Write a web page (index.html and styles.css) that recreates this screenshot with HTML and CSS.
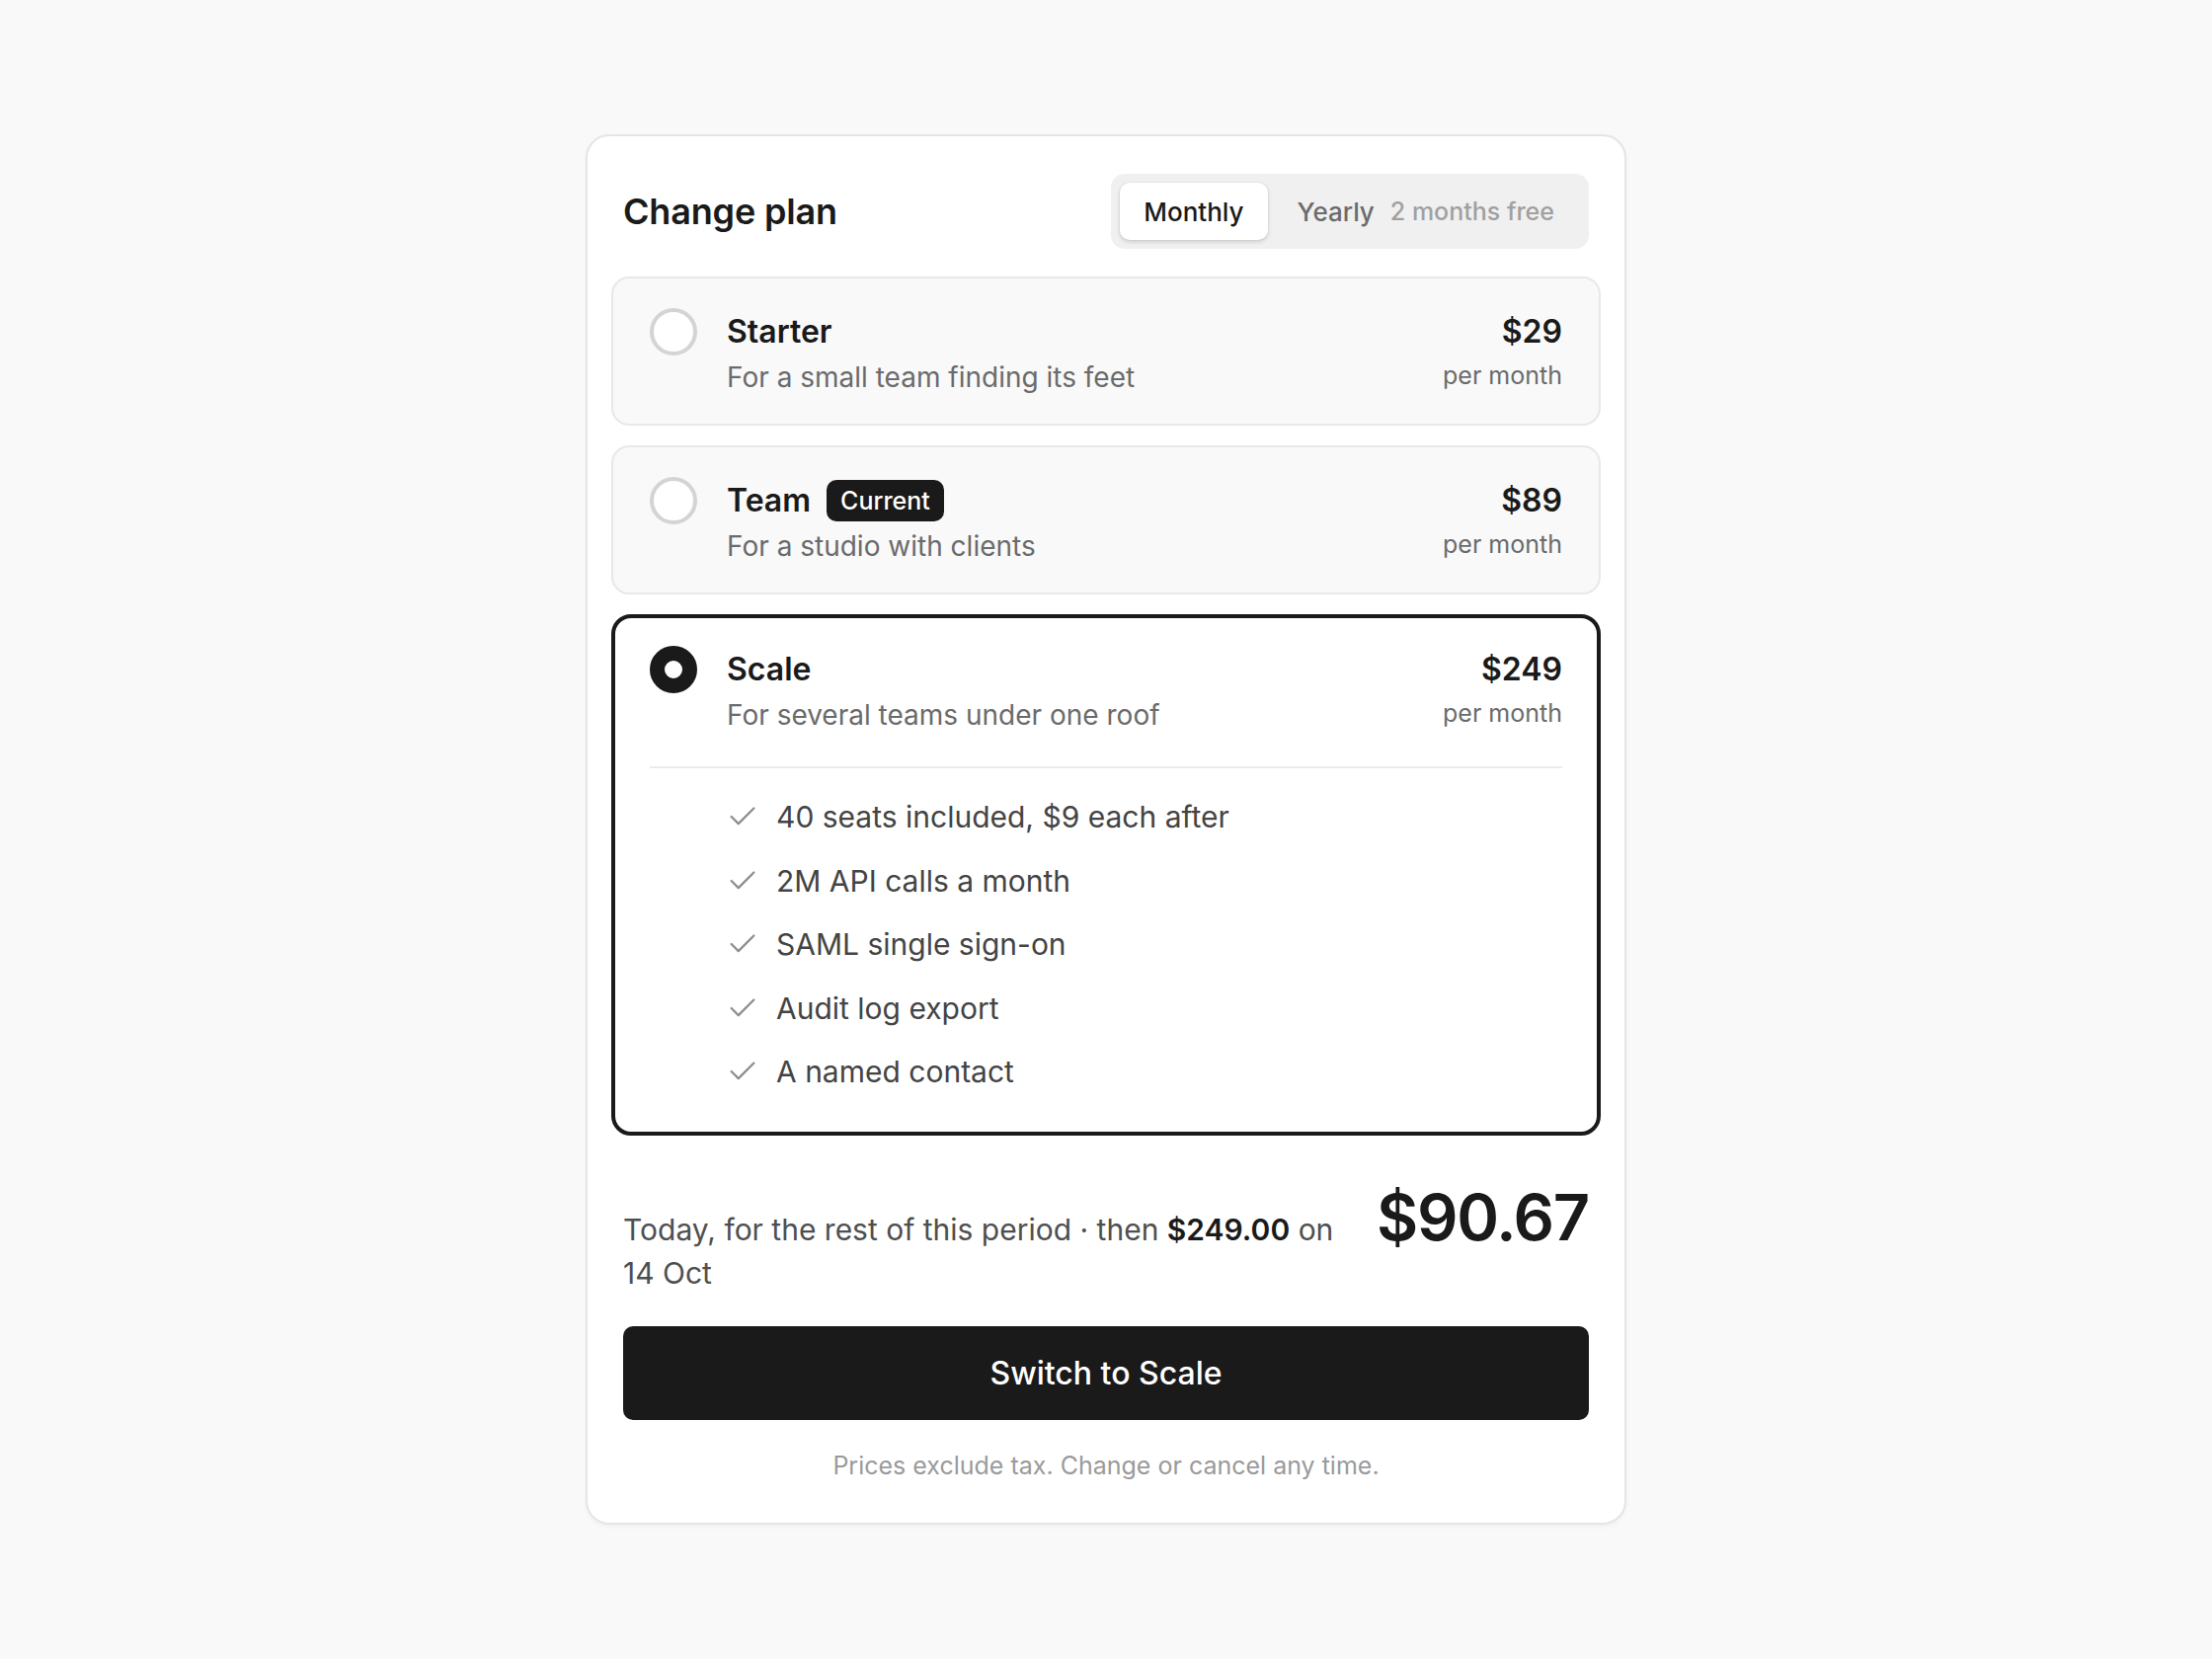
FILE: index.html
```html
<!DOCTYPE html>
<html lang="en">
<head>
<meta charset="utf-8">
<title>Change plan</title>
<link rel="stylesheet" href="styles.css">
</head>
<body>
<main class="card">
  <header class="card-head">
    <h1 class="card-title">Change plan</h1>
    <div class="toggle">
      <button class="toggle-btn is-active">Monthly</button>
      <button class="toggle-btn toggle-btn-yearly"><span>Yearly</span><span class="toggle-note">2 months free</span></button>
    </div>
  </header>

  <div class="plans">
    <div class="plan">
      <div class="plan-row">
        <span class="radio"></span>
        <div class="plan-body">
          <div class="plan-name">Starter</div>
          <div class="plan-desc">For a small team finding its feet</div>
        </div>
        <div class="plan-price">
          <div class="price">$29</div>
          <div class="per">per month</div>
        </div>
      </div>
    </div>

    <div class="plan">
      <div class="plan-row">
        <span class="radio"></span>
        <div class="plan-body">
          <div class="plan-name"><span>Team</span><span class="badge">Current</span></div>
          <div class="plan-desc">For a studio with clients</div>
        </div>
        <div class="plan-price">
          <div class="price">$89</div>
          <div class="per">per month</div>
        </div>
      </div>
    </div>

    <div class="plan is-selected">
      <div class="plan-row">
        <span class="radio is-checked"></span>
        <div class="plan-body">
          <div class="plan-name">Scale</div>
          <div class="plan-desc">For several teams under one roof</div>
        </div>
        <div class="plan-price">
          <div class="price">$249</div>
          <div class="per">per month</div>
        </div>
      </div>
      <hr class="plan-divider">
      <ul class="features">
        <li class="feature"><svg class="check" viewBox="0 0 24 24"><polyline points="20 6 9 17 4 12"/></svg>40 seats included, $9 each after</li>
        <li class="feature"><svg class="check" viewBox="0 0 24 24"><polyline points="20 6 9 17 4 12"/></svg>2M API calls a month</li>
        <li class="feature"><svg class="check" viewBox="0 0 24 24"><polyline points="20 6 9 17 4 12"/></svg>SAML single sign-on</li>
        <li class="feature"><svg class="check" viewBox="0 0 24 24"><polyline points="20 6 9 17 4 12"/></svg>Audit log export</li>
        <li class="feature"><svg class="check" viewBox="0 0 24 24"><polyline points="20 6 9 17 4 12"/></svg>A named contact</li>
      </ul>
    </div>
  </div>

  <footer class="card-foot">
    <div class="summary">
      <p class="summary-text">Today, for the rest of this period · then <strong>$249.00</strong> on 14 Oct</p>
      <div class="summary-amount">$90.67</div>
    </div>
    <button class="cta">Switch to Scale</button>
    <p class="fineprint">Prices exclude tax. Change or cancel any time.</p>
  </footer>
</main>
</body>
</html>
```

FILE: styles.css
```css
* { box-sizing: border-box; }

html, body {
  margin: 0;
  padding: 0;
}

body {
  min-height: 100vh;
  display: flex;
  align-items: center;
  justify-content: center;
  background: #f9f9f9;
  font-family: Inter, "Noto Sans", "Liberation Sans", sans-serif;
  color: #1a1a1a;
}

.card {
  width: 1054px;
  background: #ffffff;
  border: 2px solid #e5e5e5;
  border-radius: 24px;
  padding: 24px;
  box-shadow: 0 2px 4px rgba(0, 0, 0, 0.04);
}

.card-head {
  display: flex;
  align-items: center;
  justify-content: space-between;
  padding: 14px 12px 0;
  margin-bottom: 28px;
}

.card-title {
  margin: 0;
  font-size: 36px;
  font-weight: 600;
  letter-spacing: -0.005em;
  color: #1a1a1a;
}

.toggle {
  display: flex;
  align-items: center;
  gap: 4px;
  height: 76px;
  padding: 8px 9px;
  background: #f0f0f0;
  border-radius: 14px;
}

.toggle-btn {
  height: 58px;
  border: 0;
  background: transparent;
  border-radius: 10px;
  padding: 0 24px;
  font-family: inherit;
  font-size: 26px;
  font-weight: 500;
  color: #6b6b6b;
  display: flex;
  align-items: center;
  cursor: pointer;
}

.toggle-btn-yearly {
  padding: 0 26px;
}

.toggle-btn.is-active {
  background: #ffffff;
  color: #1a1a1a;
  box-shadow: 0 2px 4px rgba(0, 0, 0, 0.14), 0 0 0 1px rgba(0, 0, 0, 0.03);
}

.toggle-note {
  margin-left: 16px;
  font-size: 25px;
  font-weight: 500;
  color: #a0a0a0;
}

.plans {
  display: flex;
  flex-direction: column;
  gap: 20px;
}

.plan {
  background: #f9f9f9;
  border: 2px solid #e8e8e8;
  border-radius: 18px;
  padding: 30px 37px 25px;
}

.plan.is-selected {
  background: #ffffff;
  border: 4px solid #1a1a1a;
  border-radius: 20px;
  padding: 28px 35px 37px;
}

.plan-row {
  display: flex;
  align-items: flex-start;
  gap: 30px;
}

.radio {
  flex: none;
  width: 48px;
  height: 48px;
  border-radius: 50%;
  border: 4px solid #d4d4d4;
  background: #ffffff;
}

.radio.is-checked {
  border: 15px solid #1a1a1a;
  background: #ffffff;
}

.plan-body {
  flex: 1;
  min-width: 0;
}

.plan-name {
  display: flex;
  align-items: center;
  gap: 16px;
  font-size: 32px;
  line-height: 48px;
  font-weight: 600;
  color: #1a1a1a;
}

.badge {
  display: inline-flex;
  align-items: center;
  height: 42px;
  padding: 0 14px;
  border-radius: 10px;
  background: #1a1a1a;
  color: #ffffff;
  font-size: 25px;
  font-weight: 500;
}

.plan-desc {
  font-size: 28px;
  line-height: 44px;
  color: #6b6b6b;
}

.plan-price {
  text-align: right;
}

.price {
  font-size: 32px;
  line-height: 48px;
  font-weight: 600;
  color: #1a1a1a;
}

.per {
  font-size: 25px;
  line-height: 40px;
  color: #6b6b6b;
}

.plan-divider {
  margin: 30px 0 0;
  border: 0;
  border-top: 2px solid #ebebeb;
}

.features {
  list-style: none;
  margin: 0;
  padding: 25px 0 0 77px;
  display: flex;
  flex-direction: column;
  gap: 16.5px;
}

.feature {
  display: flex;
  align-items: center;
  gap: 17px;
  font-size: 30px;
  line-height: 48px;
  color: #444444;
}

.check {
  flex: none;
  width: 34px;
  height: 34px;
  fill: none;
  stroke: #8e8e8e;
  stroke-width: 1.6;
  stroke-linecap: round;
  stroke-linejoin: round;
}

.card-foot {
  padding: 0 12px 16px;
}

.summary {
  display: flex;
  align-items: baseline;
  gap: 28px;
  margin-top: 50px;
}

.summary-text {
  flex: 1;
  margin: 0;
  font-size: 30px;
  line-height: 44px;
  color: #4f4f4f;
}

.summary-text strong {
  font-weight: 600;
  color: #1a1a1a;
}

.summary-amount {
  font-size: 65px;
  line-height: 1;
  font-weight: 600;
  letter-spacing: -0.02em;
  color: #1a1a1a;
}

.cta {
  display: block;
  width: 100%;
  height: 95px;
  margin-top: 32px;
  border: 0;
  border-radius: 10px;
  background: #1a1a1a;
  color: #ffffff;
  font-family: inherit;
  font-size: 32px;
  font-weight: 500;
  cursor: pointer;
}

.fineprint {
  margin: 28px 0 0;
  text-align: center;
  font-size: 25px;
  line-height: 36px;
  color: #9a9a9a;
}
```
